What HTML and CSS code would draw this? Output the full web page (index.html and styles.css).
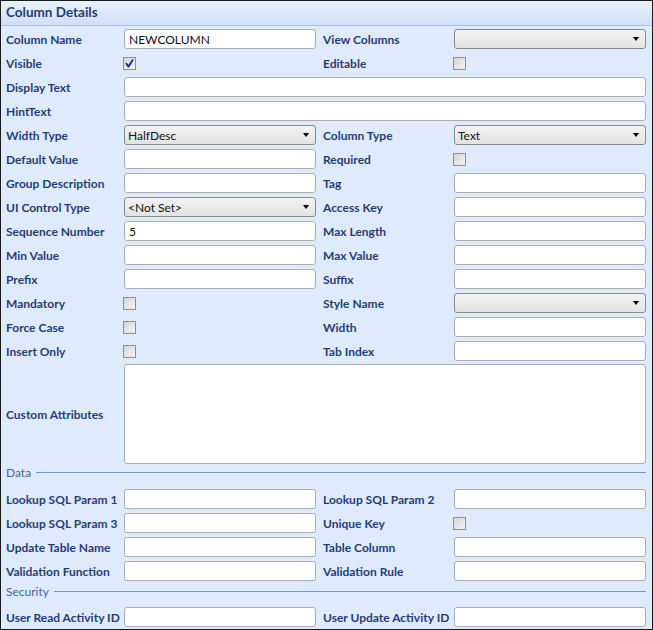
FILE: index.html
```html
<!DOCTYPE html>
<html>
<head>
<meta charset="utf-8">
<link rel="stylesheet" href="styles.css">
</head>
<body>
<div class="panel">
  <div class="header">Column Details</div>
  <div class="form">
    <label>Column Name</label><div class="field"><div class="input">NEWCOLUMN</div></div>
    <label class="rl">View Columns</label><div class="field"><div class="select"><span></span><i class="arrow"></i></div></div>

    <label>Visible</label><div class="field"><span class="cb checked"><svg viewBox="0 0 13 13" width="13" height="13"><path d="M3.4 6.8 L5.5 9.6 L9.6 3.2" fill="none" stroke="#1b1f7a" stroke-width="1.8" stroke-linecap="round" stroke-linejoin="round"/></svg></span></div>
    <label class="rl">Editable</label><div class="field"><span class="cb"></span></div>

    <label>Display Text</label><div class="field wide"><div class="input"></div></div>
    <label>HintText</label><div class="field wide"><div class="input"></div></div>

    <label>Width Type</label><div class="field"><div class="select"><span>HalfDesc</span><i class="arrow"></i></div></div>
    <label class="rl">Column Type</label><div class="field"><div class="select"><span>Text</span><i class="arrow"></i></div></div>

    <label>Default Value</label><div class="field"><div class="input"></div></div>
    <label class="rl">Required</label><div class="field"><span class="cb"></span></div>

    <label>Group Description</label><div class="field"><div class="input"></div></div>
    <label class="rl">Tag</label><div class="field"><div class="input"></div></div>

    <label>UI Control Type</label><div class="field"><div class="select"><span>&lt;Not Set&gt;</span><i class="arrow"></i></div></div>
    <label class="rl">Access Key</label><div class="field"><div class="input"></div></div>

    <label>Sequence Number</label><div class="field"><div class="input">5</div></div>
    <label class="rl">Max Length</label><div class="field"><div class="input"></div></div>

    <label>Min Value</label><div class="field"><div class="input"></div></div>
    <label class="rl">Max Value</label><div class="field"><div class="input"></div></div>

    <label>Prefix</label><div class="field"><div class="input"></div></div>
    <label class="rl">Suffix</label><div class="field"><div class="input"></div></div>

    <label>Mandatory</label><div class="field"><span class="cb"></span></div>
    <label class="rl">Style Name</label><div class="field"><div class="select"><span></span><i class="arrow"></i></div></div>

    <label>Force Case</label><div class="field"><span class="cb"></span></div>
    <label class="rl">Width</label><div class="field"><div class="input"></div></div>

    <label>Insert Only</label><div class="field"><span class="cb"></span></div>
    <label class="rl">Tab Index</label><div class="field"><div class="input"></div></div>

    <label class="tall">Custom Attributes</label><div class="field wide tallf"><div class="textarea"></div></div>

    <div class="legend data"><span>Data</span><i></i></div>

    <label>Lookup SQL Param 1</label><div class="field"><div class="input"></div></div>
    <label class="rl">Lookup SQL Param 2</label><div class="field"><div class="input"></div></div>

    <label>Lookup SQL Param 3</label><div class="field"><div class="input"></div></div>
    <label class="rl">Unique Key</label><div class="field"><span class="cb"></span></div>

    <label>Update Table Name</label><div class="field"><div class="input"></div></div>
    <label class="rl">Table Column</label><div class="field"><div class="input"></div></div>

    <label>Validation Function</label><div class="field"><div class="input"></div></div>
    <label class="rl">Validation Rule</label><div class="field"><div class="input"></div></div>

    <div class="legend sec"><span>Security</span><i></i></div>

    <label>User Read Activity ID</label><div class="field"><div class="input"></div></div>
    <label class="rl">User Update Activity ID</label><div class="field"><div class="input"></div></div>
  </div>
</div>
</body>
</html>
```

FILE: styles.css
```css
* { box-sizing: border-box; }
html, body { margin: 0; padding: 0; background: #fff; }
body { width: 653px; height: 630px; overflow: hidden; }

.panel {
  width: 653px;
  height: 630px;
  border: 1px solid #1a1a1a;
  background: #dfeafc;
  font-family: Lato, "Open Sans", sans-serif;
  display: flex;
  flex-direction: column;
}

.header {
  height: 25px;
  padding: 3px 0 0 5px;
  font-size: 13.5px;
  font-weight: bold;
  color: #1f3e78;
  background: linear-gradient(#e9f1fd, #cfdff6);
  border-bottom: 1px solid #a8c2e6;
  flex-shrink: 0;
}

.form {
  display: grid;
  grid-template-columns: 118px 192px 138px 192px;
  grid-template-rows: repeat(14, 24px) 96px 28px repeat(4, 24px) 22px 24px;
  padding: 1px 6px 0 5px;
}

label {
  font-size: 12px;
  font-weight: bold;
  color: #1f3e78;
  display: flex;
  align-items: center;
  white-space: nowrap;
}
label.rl { padding-left: 7px; }

.field { display: flex; align-items: center; }
.field.wide { grid-column: 2 / 5; }

.input {
  width: 100%;
  height: 20px;
  background: #fff;
  border: 1px solid #abadb3;
  border-radius: 3px;
  font-size: 12px;
  color: #111;
  padding: 2px 0 0 4px;
}

.select {
  width: 100%;
  height: 20px;
  border: 1px solid #8a8a8a;
  border-radius: 3px;
  background: linear-gradient(#f3f3f3, #e3e3e3);
  font-size: 12px;
  color: #111;
  padding: 2px 0 0 3px;
  display: flex;
  justify-content: space-between;
}
.arrow {
  width: 0; height: 0;
  border-left: 3.5px solid transparent;
  border-right: 3.5px solid transparent;
  border-top: 4px solid #000;
  margin: 5px 6px 0 0;
}

.cb {
  width: 13px;
  height: 13px;
  margin-left: -1px;
  border: 1px solid #8e8f8f;
  background: linear-gradient(135deg, #d4d4d4, #f4f4f4);
  display: inline-block;
  position: relative;
}
.cb svg { position: absolute; left: -1px; top: -1px; }

label.tall { align-self: stretch; padding-top: 6px; }
.field.tallf { align-items: flex-start; padding-top: 1px; }
.textarea {
  width: 100%;
  height: 100px;
  background: #fff;
  border: 1px solid #abadb3;
  border-radius: 3px;
}

.legend {
  grid-column: 1 / 5;
  display: flex;
  align-items: center;
  font-size: 12px;
  color: #4d6796;
  gap: 5px;
  height: 16px;
}
.legend.data { margin-top: 5px; }
.legend.sec { margin-top: 0; }
.legend i {
  flex: 1;
  height: 1px;
  background: #6c95d1;
  margin-top: 1px;
}
```
